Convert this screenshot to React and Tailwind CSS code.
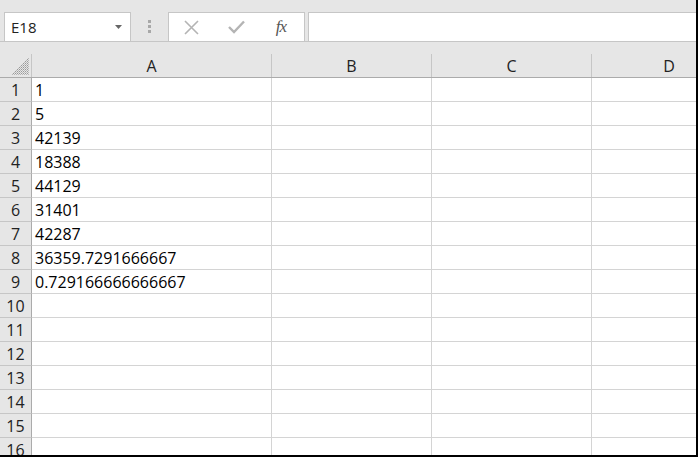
import React from "react";

const rows = [
  "1",
  "5",
  "42139",
  "18388",
  "44129",
  "31401",
  "42287",
  "36359.7291666667",
  "0.729166666666667",
  "", "", "", "", "", "", "",
];

const font = { fontFamily: '"Open Sans", "Liberation Sans", sans-serif' };

function Corner() {
  return (
    <svg width="18" height="18" viewBox="0 0 18 18" className="absolute right-[2px] bottom-[2px]">
      <defs>
        <pattern id="dots" width="2" height="2" patternUnits="userSpaceOnUse">
          <rect width="1" height="1" fill="#9a9a9a" />
          <rect x="1" y="1" width="1" height="1" fill="#b8b8b8" />
        </pattern>
      </defs>
      <polygon points="18,0 18,18 0,18" fill="url(#dots)" />
    </svg>
  );
}

export default function App() {
  return (
    <div
      className="w-[698px] h-[457px] overflow-hidden bg-[#e6e6e6] border-r-2 border-b-2 border-black text-black"
      style={font}
    >
      {/* formula bar */}
      <div className="h-[42px] pt-[12px] flex items-stretch border-b border-[#c6c6c6]">
        <div className="ml-[4px] w-[127px] bg-white border border-b-0 border-[#c6c6c6] flex items-center justify-between pl-[6px] pr-[8px]">
          <span className="text-[15px] text-[#222]">E18</span>
          <svg width="7" height="4" viewBox="0 0 7 4">
            <polygon points="0,0 7,0 3.5,4" fill="#666" />
          </svg>
        </div>
        <div className="w-[37px] flex items-center justify-center">
          <div className="flex flex-col gap-[2px]">
            <span className="w-[3px] h-[3px] bg-[#a8a8a8]" />
            <span className="w-[3px] h-[3px] bg-[#a8a8a8]" />
            <span className="w-[3px] h-[3px] bg-[#a8a8a8]" />
          </div>
        </div>
        <div className="w-[137px] bg-white border border-b-0 border-[#c6c6c6] flex items-center">
          <div className="w-[44px] flex justify-center">
            <svg width="15" height="15" viewBox="0 0 15 15">
              <path d="M1 1 L14 14 M14 1 L1 14" stroke="#b4b4b4" strokeWidth="1.6" />
            </svg>
          </div>
          <div className="w-[46px] flex justify-center">
            <svg width="17" height="14" viewBox="0 0 17 14">
              <path d="M1 7 L6 12 L16 1.5" stroke="#b4b4b4" strokeWidth="2.4" fill="none" />
            </svg>
          </div>
          <div className="w-[44px] flex justify-center">
            <span
              className="italic text-[17px] text-[#555] tracking-[-1px]"
              style={{ fontFamily: '"Liberation Serif", serif' }}
            >
              fx
            </span>
          </div>
        </div>
        <div className="ml-[3px] flex-1 bg-white border border-b-0 border-r-0 border-[#c6c6c6]" />
      </div>

      {/* column headers */}
      <div className="mt-[12px] h-[24px] flex border-b border-[#ababab] text-[16px] text-[#222]">
        <div className="relative w-[32px] border-r border-[#c6c6c6]">
          <Corner />
        </div>
        <div className="w-[240px] border-r border-[#c6c6c6] flex items-center justify-center">A</div>
        <div className="w-[160px] border-r border-[#c6c6c6] flex items-center justify-center">B</div>
        <div className="w-[160px] border-r border-[#c6c6c6] flex items-center justify-center">C</div>
        <div className="flex-1 flex items-center justify-center pl-[50px]">D</div>
      </div>

      {/* grid */}
      <div className="flex flex-col">
        {rows.map((v, i) => (
          <div key={i} className="h-[24px] flex shrink-0 text-[16px]">
            <div className="w-[32px] bg-[#e6e6e6] border-r border-b border-[#ababab] border-b-[#c6c6c6] flex items-center justify-center text-[#222]">
              {i + 1}
            </div>
            <div className="w-[240px] bg-white border-r border-b border-[#d4d4d4] flex items-center pl-[3px] whitespace-nowrap">
              {v}
            </div>
            <div className="w-[160px] bg-white border-r border-b border-[#d4d4d4]" />
            <div className="w-[160px] bg-white border-r border-b border-[#d4d4d4]" />
            <div className="flex-1 bg-white border-b border-[#d4d4d4]" />
          </div>
        ))}
      </div>
    </div>
  );
}
